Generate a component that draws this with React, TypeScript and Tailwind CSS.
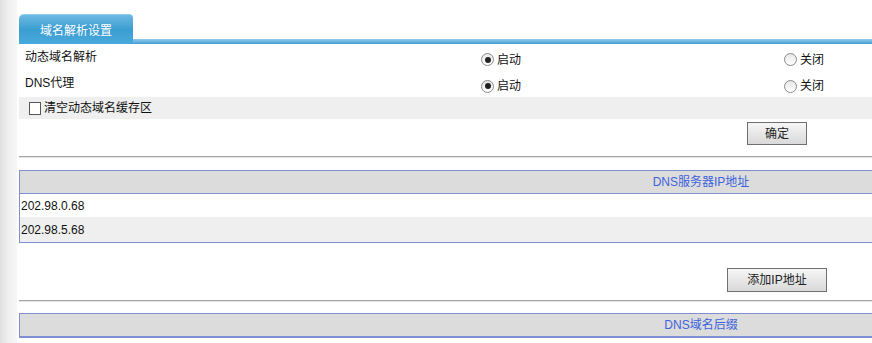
import React from "react";

const font = { fontFamily: '"Liberation Sans", "Noto Sans CJK SC", sans-serif' };

function Radio({ checked, label }: { checked?: boolean; label: string }) {
  return (
    <span className="flex items-center">
      <span className="w-[13px] h-[13px] rounded-full border border-[#8a8a8a] bg-gradient-to-b from-[#e8e8e8] to-white flex items-center justify-center">
        {checked && <span className="w-[6px] h-[6px] rounded-full bg-[#222]" />}
      </span>
      <span className="ml-[3px] text-[12px] text-[#111] leading-none">{label}</span>
    </span>
  );
}

function Btn({ label, w, h }: { label: string; w: string; h: string }) {
  return (
    <button
      className={`${w} ${h} border border-[#6f6f6f] bg-gradient-to-b from-[#f6f6f6] to-[#d9d9d9] text-[12px] text-[#222] flex items-center justify-center leading-none`}
    >
      {label}
    </button>
  );
}

function Divider() {
  return <div className="h-[2px] border-t border-[#a3a3a3] border-b border-b-[#e6e6e6]" />;
}

export default function App() {
  return (
    <div className="w-full h-[343px] overflow-hidden bg-white flex" style={font}>
      <div className="w-[17px] shrink-0 bg-gradient-to-r from-[#e0e0e0] via-[#efefef] to-[#f7f7f7]" />
      <div className="w-[1364px] shrink-0 ml-[2px] pt-[14px]">
        {/* Tab header */}
        <div className="flex items-end h-[30px]">
          <div className="w-[114px] h-[30px] rounded-tl-[5px] rounded-tr-[4px] border-t border-[#8ccbec] bg-gradient-to-b from-[#6db9e2] via-[#3a9ed2] to-[#4aa9dc] flex items-center justify-center text-white text-[12px] leading-none pt-[2px]">
            域名解析设置
          </div>
          <div className="flex-1 h-[5px] bg-gradient-to-b from-[#94cdee] to-[#3f9fd4]" />
        </div>

        {/* Settings rows */}
        <div className="flex items-center h-[26px] text-[12px] text-[#111]">
          <div className="w-[459px] pl-[6px] pb-[1px]">动态域名解析</div>
          <div className="w-[303px] pl-[3px] pt-[5px]">
            <Radio checked label="启动" />
          </div>
          <div className="pl-[3px] pt-[5px]">
            <Radio label="关闭" />
          </div>
        </div>
        <div className="flex items-center h-[27px] text-[12px] text-[#111]">
          <div className="w-[459px] pl-[6px] pb-[2px]">DNS代理</div>
          <div className="w-[303px] pl-[3px] pt-[5px]">
            <Radio checked label="启动" />
          </div>
          <div className="pl-[3px] pt-[5px]">
            <Radio label="关闭" />
          </div>
        </div>
        <div className="flex items-center h-[22px] bg-[#eeefee] text-[12px] text-[#111] pl-[10px]">
          <span className="w-[12px] h-[13px] border border-[#555] bg-white" />
          <span className="ml-[3px]">清空动态域名缓存区</span>
        </div>

        <div className="pt-[3px] pl-[728px]">
          <Btn label="确定" w="w-[60px]" h="h-[23px]" />
        </div>
        <div className="mt-[11px]">
          <Divider />
        </div>

        {/* DNS server table */}
        <div className="mt-[12px] border border-[#7f8fd4]">
          <div className="h-[23px] bg-[#dcdcdc] border-b border-[#7f8fd4] flex items-center justify-center text-[12px] text-[#3d63dd]">
            DNS服务器IP地址
          </div>
          <div className="h-[23px] flex items-center pl-[1px] text-[12px] text-[#111]">202.98.0.68</div>
          <div className="h-[25px] flex items-center pl-[1px] bg-[#eeefee] text-[12px] text-[#111]">202.98.5.68</div>
        </div>

        <div className="mt-[25px] pl-[708px]">
          <Btn label="添加IP地址" w="w-[100px]" h="h-[24px]" />
        </div>
        <div className="mt-[8px]">
          <Divider />
        </div>

        {/* DNS suffix table */}
        <div className="mt-[11px] border border-[#7f8fd4]">
          <div className="h-[23px] bg-[#dcdcdc] border-b border-[#7f8fd4] flex items-center justify-center text-[12px] text-[#3d63dd]">
            DNS域名后缀
          </div>
        </div>
      </div>
    </div>
  );
}
